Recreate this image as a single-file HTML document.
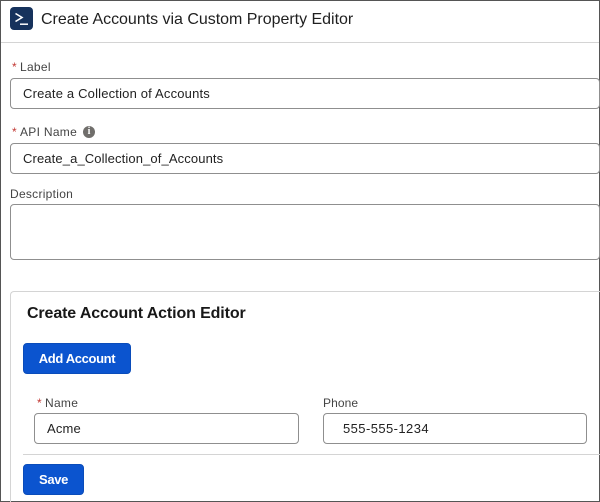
<!DOCTYPE html>
<html>
<head>
<meta charset="utf-8">
<style>
html,body{margin:0;padding:0;background:#fff}
body{width:600px;height:502px;position:relative;overflow:hidden;font-family:"Liberation Sans",Arial,sans-serif;color:#181818}
.a{position:absolute;box-sizing:border-box;white-space:nowrap}
.lbl{font-size:12px;line-height:14px;color:#444;letter-spacing:.3px}
.req{color:#c23934;font-size:12px;margin-right:3px}
.inp{border:1px solid #8f8f8f;border-radius:4px;background:#fff;font-size:13px;line-height:30px;color:#222;letter-spacing:.18px}
.btn{background:#0b54cf;border:1px solid #0a4cba;border-radius:4px;color:#fff;font-size:13px;font-weight:bold;text-align:center;line-height:30px;letter-spacing:-.36px}
</style>
</head>
<body>
<div class="a" style="left:0;top:0;width:600px;height:1px;background:#555"></div>
<div class="a" style="left:0;top:0;width:1px;height:502px;background:#555"></div>
<div class="a" style="left:599px;top:0;width:1px;height:502px;background:#555"></div>
<div class="a" style="left:0;top:501px;width:600px;height:1px;background:#555"></div>

<div class="a" style="left:10px;top:7px;width:23px;height:23px;background:#16325c;border-radius:4px"></div>
<svg class="a" style="left:10px;top:7px" width="23" height="23" viewBox="0 0 23 23"><path d="M5.5 6.5l6.5 4-6.5 4" fill="none" stroke="#fff" stroke-width="1.6"/><path d="M10 17.2h8" stroke="#fff" stroke-width="1.5"/></svg>
<div class="a" style="left:41px;top:10px;font-size:16px;line-height:20px;color:#1f1f1f;letter-spacing:-.02px">Create Accounts via Custom Property Editor</div>
<div class="a" style="left:1px;top:42px;width:598px;height:1px;background:#d4d4d4"></div>

<div class="a lbl" style="left:12px;top:60px"><span class="req">*</span>Label</div>
<div class="a inp" style="left:10px;top:78px;width:590px;height:31px;padding-left:12px">Create a Collection of Accounts</div>

<div class="a lbl" style="left:12px;top:125px"><span class="req">*</span>API Name</div>
<div class="a" style="left:83px;top:126px;width:12px;height:12px;border-radius:50%;background:#706e6b;color:#fff;font:bold 10px/12px 'Liberation Serif',serif;text-align:center">i</div>
<div class="a inp" style="left:10px;top:143px;width:590px;height:31px;padding-left:12px;letter-spacing:.12px">Create_a_Collection_of_Accounts</div>

<div class="a lbl" style="left:10px;top:187px;letter-spacing:.28px">Description</div>
<div class="a inp" style="left:10px;top:204px;width:590px;height:56px"></div>

<div class="a" style="left:10px;top:291px;width:590px;height:211px;border:1px solid #d4d4d4;border-right:0;border-bottom:0;border-top-left-radius:4px"></div>
<div class="a" style="left:27px;top:304px;font-size:16px;line-height:20px;font-weight:bold;color:#181818;letter-spacing:-.12px">Create Account Action Editor</div>
<div class="a btn" style="left:23px;top:343px;width:108px;height:31px">Add Account</div>

<div class="a lbl" style="left:37px;top:396px"><span class="req">*</span>Name</div>
<div class="a inp" style="left:34px;top:413px;width:265px;height:31px;padding-left:12px">Acme</div>
<div class="a lbl" style="left:323px;top:396px;letter-spacing:.1px">Phone</div>
<div class="a inp" style="left:323px;top:413px;width:264px;height:31px;padding-left:19px;letter-spacing:.42px">555-555-1234</div>

<div class="a" style="left:23px;top:454px;width:577px;height:1px;background:#d4d4d4"></div>
<div class="a btn" style="left:23px;top:464px;width:61px;height:31px">Save</div>
</body>
</html>
